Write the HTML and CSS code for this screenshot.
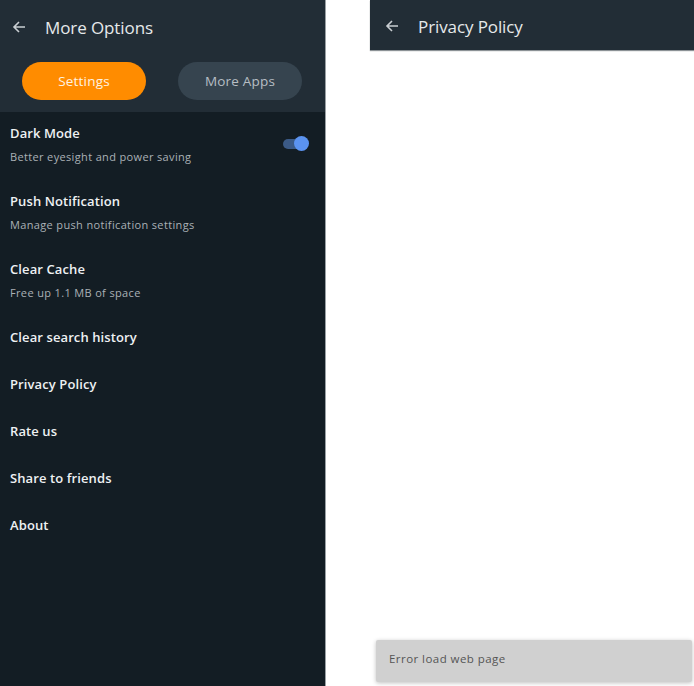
FILE: index.html
```html
<!DOCTYPE html>
<html>
<head>
<meta charset="utf-8">
<link rel="stylesheet" href="styles.css">
</head>
<body>
<div class="screens">
  <div class="panel left">
    <div class="top">
      <div class="bar">
        <svg class="back" width="16" height="16" viewBox="0 0 16 16"><path d="M14 8H3M8 3L3 8l5 5" fill="none" stroke="#c9ced2" stroke-width="1.6"/></svg>
        <span class="title">More Options</span>
      </div>
      <div class="tabs">
        <div class="tab active">Settings</div>
        <div class="tab">More Apps</div>
      </div>
    </div>
    <div class="list">
      <div class="item two">
        <div class="txt"><div class="name">Dark Mode</div><div class="sub">Better eyesight and power saving</div></div>
        <div class="toggle"><span class="track"></span><span class="knob"></span></div>
      </div>
      <div class="item two"><div class="txt"><div class="name">Push Notification</div><div class="sub">Manage push notification settings</div></div></div>
      <div class="item two"><div class="txt"><div class="name">Clear Cache</div><div class="sub">Free up 1.1 MB of space</div></div></div>
      <div class="item one"><div class="name">Clear search history</div></div>
      <div class="item one"><div class="name">Privacy Policy</div></div>
      <div class="item one"><div class="name">Rate us</div></div>
      <div class="item one"><div class="name">Share to friends</div></div>
      <div class="item one"><div class="name">About</div></div>
    </div>
  </div>
  <div class="panel right">
    <div class="bar rbar">
      <svg class="back" width="16" height="16" viewBox="0 0 16 16"><path d="M14 8H3M8 3L3 8l5 5" fill="none" stroke="#c9ced2" stroke-width="1.6"/></svg>
      <span class="title">Privacy Policy</span>
    </div>
    <div class="snack">Error load web page</div>
  </div>
</div>
</body>
</html>
```
FILE: styles.css
```css
* { box-sizing: border-box; }
html, body { margin: 0; padding: 0; background: #fff; }
body { font-family: "Open Sans", "Noto Sans", sans-serif; }
.screens { display: flex; height: 686px; gap: 44px; }
.panel { height: 686px; }
.left { width: 326px; background: #131d24; border-right: 1px solid #9aa0a4; display: flex; flex-direction: column; }
.top { background: #222d36; height: 112px; }
.bar { display: flex; align-items: center; height: 54px; padding-left: 11px; }
.back { flex: none; }
.title { color: #e6e9eb; font-size: 17px; margin-left: 18px; letter-spacing: -0.1px; }
.tabs { display: flex; gap: 32px; padding-left: 22px; margin-top: 8px; }
.tab { width: 124px; height: 38px; border-radius: 19px; background: #36444f; color: #b7bec4; font-size: 13.5px; display: flex; align-items: center; justify-content: center; font-weight: 500; letter-spacing: 0.2px; }
.tab.active { background: #ff8c00; color: #fff3e2; }
.list { padding-top: 12px; }
.item { display: flex; padding-left: 10px; padding-right: 16px; align-items: flex-start; }
.item.two { height: 68px; }
.item.one { height: 47px; }
.txt { flex: 1; }
.name { color: #eef1f3; font-size: 13px; font-weight: 600; letter-spacing: 0.1px; line-height: 18px; }
.sub { color: #aab1b6; font-size: 11px; letter-spacing: 0.35px; margin-top: 8px; line-height: 14px; }
.toggle { position: relative; width: 27px; height: 16px; margin-top: 12px; }
.track { position: absolute; left: 1px; top: 3px; width: 22px; height: 10px; border-radius: 5px; background: #3b5a86; }
.knob { position: absolute; right: 0; top: 0; width: 15px; height: 15px; border-radius: 50%; background: #5b93f0; }
.right { flex: 1; position: relative; background: #fff; }
.rbar { background: #222d36; height: 50px; padding-left: 14px; padding-top: 2px; box-shadow: 0 1px 1px #8c9296; }
.rbar .title { margin-left: 18px; }
.snack { position: absolute; left: 6px; right: 2px; bottom: 4px; height: 42px; background: #d0d0d0; color: #555; font-size: 11.5px; letter-spacing: 0.45px; display: flex; align-items: center; padding-left: 13px; padding-bottom: 5px; box-shadow: 0 1px 4px rgba(0,0,0,0.25); border-radius: 2px; }
```
